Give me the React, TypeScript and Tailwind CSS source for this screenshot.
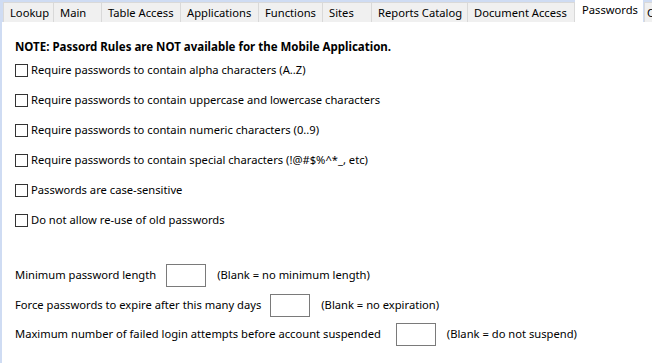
import React from 'react';

const tabs = [
    { label: 'Lookup', w: 'w-[51px]' },
    { label: 'Main', w: 'w-[48px]' },
    { label: 'Table Access', w: 'w-[79px]' },
    { label: 'Applications', w: 'w-[78px]' },
    { label: 'Functions', w: 'w-[64px]' },
    { label: 'Sites', w: 'w-[49px]' },
    { label: 'Reports Catalog', w: 'w-[96px]' },
    { label: 'Document Access', w: 'w-[107px]' },
];

const rules = [
    'Require passwords to contain alpha characters (A..Z)',
    'Require passwords to contain uppercase and lowercase characters',
    'Require passwords to contain numeric characters (0..9)',
    'Require passwords to contain special characters (!@#$%^*_, etc)',
    'Passwords are case-sensitive',
    'Do not allow re-use of old passwords',
];

function NumberRow({ label, hint, boxMargin }: { label: string; hint: string; boxMargin: string }) {
    return (
        <div className="flex items-center h-[29.5px]">
            <span>{label}</span>
            <div className={`h-[23px] w-[40px] border border-[#7a7a7a] bg-white ${boxMargin}`} />
            <span className="ml-[11px]">{hint}</span>
        </div>
    );
}

export default function App() {
    return (
        <div
            className="w-[652px] h-[363px] overflow-hidden bg-[#cfdcf3] text-black text-[11.2px]"
            style={{ fontFamily: '"Noto Sans", "Open Sans", sans-serif' }}
        >
            {/* Tab strip */}
            <div className="flex h-[22px] pl-[3px] items-end bg-[#cfdcf3]">
                {tabs.map((t) => (
                    <div
                        key={t.label}
                        className={`${t.w} h-[20px] shrink-0 border border-l-0 first:border-l border-b-0 border-[#d9d9d9] bg-[#f0f0f0] pl-[6px] leading-[19px] whitespace-nowrap`}
                    >
                        {t.label}
                    </div>
                ))}
                <div className="w-[68px] h-[22px] shrink-0 bg-white pl-[7px] leading-[19px] whitespace-nowrap">Passwords</div>
                <div className="w-[20px] h-[20px] shrink-0 ml-[1px] border border-b-0 border-[#d9d9d9] bg-[#f0f0f0] pl-[2px] leading-[19px] overflow-hidden">
                    C
                </div>
            </div>

            {/* Content panel */}
            <div className="ml-[2px] h-[341px] bg-white pl-[13px] pt-[17px]">
                <div className="font-bold leading-[16px] text-[11.5px]">NOTE: Passord Rules are NOT available for the Mobile Application.</div>
                <div className="flex flex-col">
                    {rules.map((r) => (
                        <label key={r} className="flex items-center h-[30px]">
                            <span className="w-[13px] h-[13px] border border-[#333] bg-white mr-[3px] shrink-0" />
                            <span>{r}</span>
                        </label>
                    ))}
                </div>
                <div className="mt-[26px] flex flex-col">
                    <NumberRow label="Minimum password length" hint="(Blank = no minimum length)" boxMargin="ml-[10px]" />
                    <NumberRow label="Force passwords to expire after this many days" hint="(Blank = no expiration)" boxMargin="ml-[9px]" />
                    <NumberRow
                        label="Maximum number of failed login attempts before account suspended"
                        hint="(Blank = do not suspend)"
                        boxMargin="ml-[15px]"
                    />
                </div>
            </div>
        </div>
    );
}
